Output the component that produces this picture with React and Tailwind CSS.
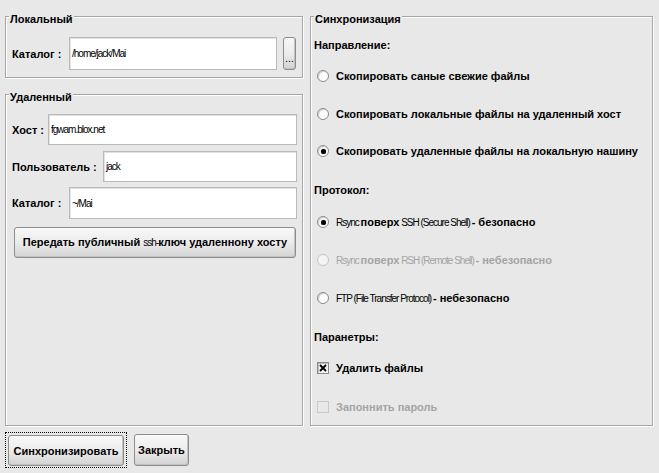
import React from 'react'

// latin fragments in the reference render squeezed and thin
function L({ children }) {
  return <span className="font-normal text-[10px] tracking-[-1px]">{children}</span>
}

function Group({ title, className, children }) {
  return (
    <div className={`flex flex-col border border-[#a6a6a6] shadow-[inset_1px_1px_0_#fff,1px_1px_0_#fff] ${className}`}>
      <div className="-mt-[5px] ml-[3px] w-fit bg-[#e8e8e8] px-[1px] text-[11px] leading-[14px] font-bold">
        {title}
      </div>
      {children}
    </div>
  )
}

function Field({ label, labelW, value, className = '' }) {
  return (
    <div className={`flex items-center ${className}`}>
      <div className={`${labelW} shrink-0 whitespace-nowrap pl-[6px] text-[11px] font-bold leading-[14px]`}>{label}</div>
      <div className="flex h-full flex-1 items-center border border-[#b9b9b9] bg-white pl-[2px] shadow-[inset_1px_1px_0_#e2e2e2]">
        <L>{value}</L>
      </div>
    </div>
  )
}

function Button({ children, className = '' }) {
  return (
    <button className={`flex items-center justify-center rounded-[3px] border border-[#8d8d8d] bg-linear-to-b from-[#f8f8f8] via-[#ececec] to-[#d3d3d3] text-[11px] font-bold leading-[14px] text-black shadow-[inset_-1px_-1px_0_#c2c2c2] whitespace-nowrap ${className}`}>
      <span>{children}</span>
    </button>
  )
}

function Radio({ checked, disabled, children, className = '' }) {
  return (
    <div className={`flex h-[20px] items-center pl-[6px] ${className}`}>
      <div
        className={`flex h-[12px] w-[12px] shrink-0 items-center justify-center rounded-full border ${
          disabled ? 'border-[#c4c4c4] bg-[#f4f4f4]' : 'border-[#8a8a8a] bg-white shadow-[inset_1px_1px_1px_#cfcfcf]'
        }`}
      >
        {checked && <div className="h-[5px] w-[5px] rounded-full bg-black shadow-[0_0_1px_#555]" />}
      </div>
      <div className={`ml-[7px] whitespace-nowrap text-[11px] font-bold leading-[14px] ${disabled ? 'text-[#a4a4a4]' : 'text-black'}`}>
        {children}
      </div>
    </div>
  )
}

function Check({ checked, disabled, children, className = '' }) {
  return (
    <div className={`flex h-[20px] items-center pl-[6px] ${className}`}>
      <div
        className={`flex h-[12px] w-[12px] shrink-0 items-center justify-center border ${
          disabled ? 'border-[#c8c8c8] bg-[#e8e8e8]' : 'border-[#8a8a8a] bg-[#f2f2f2] shadow-[inset_1px_1px_0_#bdbdbd]'
        }`}
      >
        {checked && (
          <svg width="8" height="8" viewBox="0 0 8 8">
            <path d="M1 1L7 7M7 1L1 7" stroke="#000" strokeWidth="1.8" />
          </svg>
        )}
      </div>
      <div className={`ml-[7px] whitespace-nowrap text-[11px] font-bold leading-[14px] ${disabled ? 'text-[#a4a4a4]' : 'text-black'}`}>
        {children}
      </div>
    </div>
  )
}

function Label({ children, className = '' }) {
  return (
    <div className={`flex h-[20px] items-center pl-[3px] text-[11px] font-bold leading-[14px] ${className}`}>{children}</div>
  )
}

export default function App() {
  return (
    <div className="flex h-[473px] w-[659px] flex-col overflow-hidden bg-[#e8e8e8] font-['Liberation_Sans',Arial,sans-serif] text-black">
      <div className="flex gap-[7px] pl-[5px] pt-[16px]">
        {/* left column */}
        <div className="flex w-[298px] flex-col gap-[16px]">
          <Group title="Локальный" className="h-[62px]">
            <div className="mt-[11px] flex h-[33px] items-stretch pr-[6px]">
              <Field label="Каталог :" labelW="w-[63px]" value="/home/jack/Mai" className="flex-1" />
              <Button className="ml-[6px] w-[13px] items-end pb-[4px] font-normal text-[10px]">...</Button>
            </div>
          </Group>

          <Group title="Удаленный" className="h-[332px]">
            <div className="flex flex-col pr-[5px]">
              <Field label="Хост :" labelW="w-[42px]" value="fgwam.blox.net" className="mt-[10px] h-[31px]" />
              <Field label="Пользователь :" labelW="w-[97px]" value="jack" className="mt-[6px] h-[31px]" />
              <Field label="Каталог :" labelW="w-[63px]" value="~/Mai" className="mt-[5px] h-[32px]" />
            </div>
            <Button className="ml-[8px] mt-[8px] h-[31px] w-[282px]">
              Передать публичный <L>ssh-</L>ключ удаленнону хосту
            </Button>
          </Group>
        </div>

        {/* right column */}
        <Group title="Синхронизация" className="h-[410px] w-[343px]">
          <Label className="mt-[9px]">Направление:</Label>
          <Radio className="mt-[11px]">Скопировать саные свежие файлы</Radio>
          <Radio className="mt-[18px]">Скопировать локальные файлы на удаленный хост</Radio>
          <Radio checked className="mt-[17px]">Скопировать удаленные файлы на локальную нашину</Radio>

          <Label className="mt-[19px]">Протокол:</Label>
          <Radio checked className="mt-[12px]">
            <L>Rsync </L>поверх<L> SSH (Secure Shell) </L>- безопасно
          </Radio>
          <Radio disabled className="mt-[18px]">
            <L>Rsync </L>поверх<L> RSH (Remote Shell) </L>- небезопасно
          </Radio>
          <Radio className="mt-[18px]">
            <L>FTP (File Transfer Protocol) </L>- небезопасно
          </Radio>

          <Label className="mt-[19px]">Паранетры:</Label>
          <Check checked className="mt-[11px]">Удалить файлы</Check>
          <Check disabled className="mt-[19px]">Запоннить пароль</Check>
        </Group>
      </div>

      {/* bottom buttons */}
      <div className="mt-[6px] flex items-start pl-[5px]">
        <div className="border border-dotted border-black px-[2px] pb-[1px] pt-[2px]">
          <Button className="h-[31px] w-[116px]">Синхронизировать</Button>
        </div>
        <Button className="ml-[7px] mt-[2px] h-[32px] w-[55px]">Закрыть</Button>
      </div>
    </div>
  )
}
